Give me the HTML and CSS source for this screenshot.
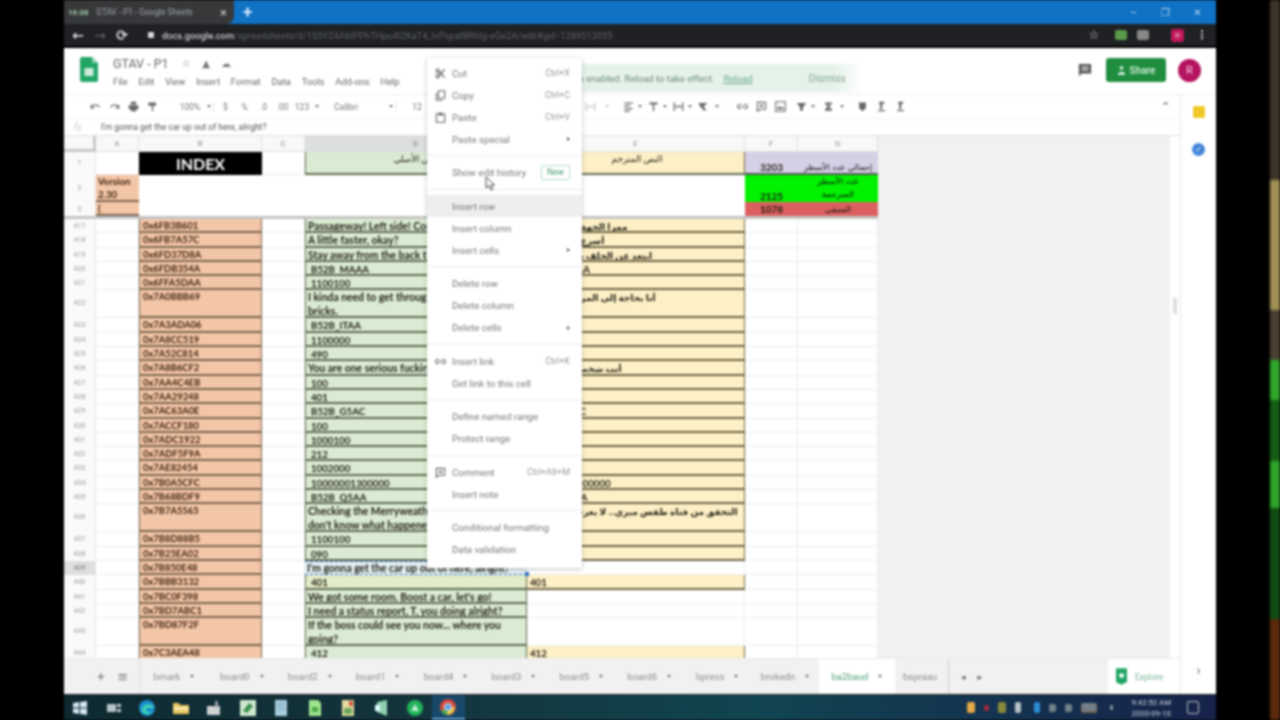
FILE: index.html
```html
<!DOCTYPE html>
<html lang="en">
<head>
<meta charset="utf-8">
<title>GTAV - P1 - Google Sheets</title>
<link rel="stylesheet" href="styles.css">
</head>
<body>
<svg class="defs" aria-hidden="true">
  <symbol id="undo" viewBox="0 0 16 16"><path d="M2 9c2-4 8-5 12 0" fill="none" stroke="currentColor" stroke-width="2"/><path d="M1 5v6h6z" fill="currentColor"/></symbol>
  <symbol id="redo" viewBox="0 0 16 16"><path d="M14 9c-2-4-8-5-12 0" fill="none" stroke="currentColor" stroke-width="2"/><path d="M15 5v6H9z" fill="currentColor"/></symbol>
  <symbol id="print" viewBox="0 0 16 16"><path d="M4 1h8v4H4zM1 6h14v6h-3v3H4v-3H1z" fill="currentColor"/></symbol>
  <symbol id="paint" viewBox="0 0 16 16"><path d="M2 2h11v5H2zM7 7h2v8H7z" fill="currentColor"/></symbol>
  <symbol id="al" viewBox="0 0 16 16"><path d="M2 2h12v2H2zM2 6h8v2H2zM2 10h12v2H2zM2 14h8v2H2z" fill="currentColor"/></symbol>
  <symbol id="va" viewBox="0 0 16 16"><path d="M2 2h12v3H2zM7 5h2v10H7z" fill="currentColor"/></symbol>
  <symbol id="wrap" viewBox="0 0 16 16"><path d="M1 2h2v12H1zM13 2h2v12h-2zM4 7h8v2H4z" fill="currentColor"/></symbol>
  <symbol id="rot" viewBox="0 0 16 16"><path d="M1 3h13L8 8l4 5-3 1-6-6z" fill="currentColor"/></symbol>
  <symbol id="link" viewBox="0 0 16 16"><path d="M6 5H4a3 3 0 0 0 0 6h2M10 5h2a3 3 0 0 1 0 6h-2M5 8h6" fill="none" stroke="currentColor" stroke-width="1.6"/></symbol>
  <symbol id="cmt" viewBox="0 0 16 16"><path d="M2 2h12v10H6l-4 3z" fill="none" stroke="currentColor" stroke-width="1.6"/><path d="M7 5h2v4H7zM5 6h6v2H5z" fill="currentColor"/></symbol>
  <symbol id="chart" viewBox="0 0 16 16"><path d="M1 1h14v14H1z" fill="none" stroke="currentColor" stroke-width="1.6"/><path d="M3 12l3-5 3 3 2-2 2 4z" fill="currentColor"/></symbol>
  <symbol id="flt" viewBox="0 0 16 16"><path d="M1 3h14l-5 6v5H6V9z" fill="currentColor"/></symbol>
  <symbol id="sum" viewBox="0 0 16 16"><path d="M3 2h10v3H8l3 3-3 3h5v3H3v-2l4-4-4-4z" fill="currentColor"/></symbol>
  <symbol id="pin" viewBox="0 0 16 16"><path d="M3 2h10v8l-5 5-5-5z" fill="currentColor"/></symbol>
  <symbol id="in" viewBox="0 0 16 16"><path d="M5 1h7v3h-3v8H6V4H4zM3 13h10v2H3z" fill="currentColor"/></symbol>
  <symbol id="scis" viewBox="0 0 16 16"><circle cx="4" cy="4" r="2.4" fill="none" stroke="currentColor" stroke-width="1.6"/><circle cx="4" cy="12" r="2.4" fill="none" stroke="currentColor" stroke-width="1.6"/><path d="M6 5l8 9M6 11l8-9" stroke="currentColor" stroke-width="2"/></symbol>
  <symbol id="copy" viewBox="0 0 16 16"><path d="M5 1h9v11H5z" fill="none" stroke="currentColor" stroke-width="1.6"/><path d="M2 4v11h9" fill="none" stroke="currentColor" stroke-width="1.6"/></symbol>
  <symbol id="paste" viewBox="0 0 16 16"><path d="M2 3h12v12H2z" fill="none" stroke="currentColor" stroke-width="1.6"/><path d="M5 1h6v4H5z" fill="currentColor"/></symbol>
</svg>
<div class="page">
  <div class="edge-left"></div>
  <div class="window">
    <div class="tabstrip">
      <div class="tab">
        <span class="fav">16:08</span>
        <span class="tab-title">GTAV - P1 - Google Sheets</span>
        <span class="tab-x">×</span>
      </div>
      <span class="newtab">+</span>
      <div class="winctl"><span>–</span><span>❐</span><span>✕</span></div>
    </div>
    <div class="addr">
      <span class="nav">←</span><span class="nav dim">→</span><span class="nav">⟳</span>
      <span class="lock"></span>
      <span class="url"><b>docs.google.com</b>/spreadsheets/d/1S5YZ4A6tPPhTHpu4I2KaT4_IvPspaf8Rfdg-eGe2A/edit#gid=1289512055</span>
      <span class="nav star">☆</span>
      <span class="ext green"></span><span class="ext grey"></span>
      <span class="prof">R</span>
      <span class="dots">⋮</span>
    </div>
    <div class="dochead">
      <svg class="logo" viewBox="0 0 18 25"><path d="M2 0h10l6 6v17a2 2 0 0 1-2 2H2a2 2 0 0 1-2-2V2a2 2 0 0 1 2-2z" fill="#23a566"/><path d="M12 0l6 6h-6z" fill="#8ed1b1"/><path d="M4.500 11h9v8h-9z" fill="#cdeadb"/></svg>
      <div class="docinfo">
        <div class="titleline">
          <span class="doctitle">GTAV - P1</span>
          <span class="ti">☆</span><span class="ti drv">▲</span><span class="ti">☁</span>
        </div>
        <div class="menubar">
          <span>File</span><span>Edit</span><span>View</span><span>Insert</span><span>Format</span><span>Data</span><span>Tools</span><span>Add-ons</span><span>Help</span>
        </div>
      </div>
      <svg class="cmtbtn" viewBox="0 0 16 16"><path d="M1 1h14v11H4l-3 3z" fill="#555"/><path d="M4 4h8v1.500H4zM4 7h8v1.500H4z" fill="#fff"/></svg>
      <div class="share"><svg viewBox="0 0 12 14" class="sh-i"><circle cx="6" cy="3.500" r="2.500" fill="#cdeadb"/><path d="M1 13c0-6 10-6 10 0z" fill="#cdeadb"/></svg>Share</div>
      <div class="avatar">R</div>
    </div>
    <div class="work">
      <div class="left">
        <div class="toolbar">
          <svg class="ic"><use href="#undo"/></svg><svg class="ic"><use href="#redo"/></svg><svg class="ic"><use href="#print"/></svg><svg class="ic"><use href="#paint"/></svg>
          <span class="tt t100">100%</span><i class="caret"></i><span class="vs"></span>
          <span class="tt w19">$</span><span class="tt w19">%</span><span class="tt w19">.0</span><span class="tt w19">.00</span><span class="tt w20">123</span><i class="caret"></i>
          <span class="tt tfont">Calibri</span><i class="caret"></i><span class="vs"></span>
          <span class="tt tsize">12</span>
          <span class="tgroup">
            <svg class="ic"><use href="#wrap"/></svg><i class="caret c2"></i>
            <svg class="ic"><use href="#al"/></svg><i class="caret"></i>
            <svg class="ic"><use href="#va"/></svg><i class="caret"></i>
            <svg class="ic"><use href="#wrap"/></svg><i class="caret"></i>
            <svg class="ic"><use href="#rot"/></svg><i class="caret c4"></i>
            <svg class="ic"><use href="#link"/></svg><svg class="ic"><use href="#cmt"/></svg><svg class="ic"><use href="#chart"/></svg>
            <svg class="ic push"><use href="#flt"/></svg><i class="caret"></i>
            <svg class="ic push"><use href="#sum"/></svg><i class="caret c3"></i>
            <svg class="ic"><use href="#pin"/></svg><svg class="ic"><use href="#in"/></svg><svg class="ic"><use href="#in"/></svg>
          </span>
          <span class="chev">⌃</span>
        </div>
        <div class="formula"><span class="fx">fx</span><span class="ftext">I'm gonna get the car up out of here, alright?</span></div>
        <div class="main">
          <div class="sheet">
            <div class="row head"><span class="corner"></span><span class="ch">A</span><span class="ch">B</span><span class="ch">C</span><span class="ch sel">D</span><span class="ch">E</span><span class="ch">F</span><span class="ch">G</span></div>
            <div class="row r1"><span class="rh">1</span><span class="w"></span><span class="idx">INDEX</span><span class="w"></span><span class="d ttl" dir="rtl">النص الأصلي</span><span class="e ttl" dir="rtl">النص المترجم</span><span class="pur num">3203</span><span class="pur ar" dir="rtl">إجمالي عدد الأسطر</span></div>
            <div class="row r2"><span class="rh">2</span><span class="k ver">Version 2.30</span><span class="b"></span><span class="b"></span><span class="b"></span><span class="b"></span><span class="grn num end">2125</span><span class="grn ar two" dir="rtl">عدد الأسطر<br>المترجمة</span></div>
            <div class="row r3"><span class="rh">3</span><span class="k ver">(</span><span class="b"></span><span class="b"></span><span class="b"></span><span class="b"></span><span class="red num">1078</span><span class="red ar" dir="rtl">المتبقي</span></div>
            <div class="frozen"></div>
            <div class="row"><span class="rh">417</span><span class="w"></span><span class="k">0x6FB3B601</span><span class="w"></span><span class="d">Passageway! Left side! Coming up on the left</span><span class="e"><span dir="rtl">ممرا الجهة اليسرى هنا</span></span><span class="w"></span><span class="w"></span></div>
            <div class="row"><span class="rh">418</span><span class="w"></span><span class="k">0x6FB7A57C</span><span class="w"></span><span class="d">A little faster, okay?</span><span class="e"><span dir="rtl">أسرع قليلا، حسنا</span></span><span class="w"></span><span class="w"></span></div>
            <div class="row"><span class="rh">419</span><span class="w"></span><span class="k">0x6FD37D8A</span><span class="w"></span><span class="d">Stay away from the back there, all right?</span><span class="e"><span dir="rtl">ابتعد عن الخلف هناك، اتفقنا</span></span><span class="w"></span><span class="w"></span></div>
            <div class="row"><span class="rh">420</span><span class="w"></span><span class="k">0x6FDB354A</span><span class="w"></span><span class="d in">B52B_MAAA</span><span class="e in">B52B_MAAA</span><span class="w"></span><span class="w"></span></div>
            <div class="row"><span class="rh">421</span><span class="w"></span><span class="k">0x6FFA5DAA</span><span class="w"></span><span class="d in">1100100</span><span class="e in">1100100</span><span class="w"></span><span class="w"></span></div>
            <div class="row tall"><span class="rh">422</span><span class="w"></span><span class="k">0x7A0BBB69</span><span class="w"></span><span class="d wrapc">I kinda need to get through this wall of<br>bricks.</span><span class="e"><span dir="rtl">أنا بحاجة إلى المرور من هناك</span></span><span class="w"></span><span class="w"></span></div>
            <div class="row"><span class="rh">423</span><span class="w"></span><span class="k">0x7A3ADA06</span><span class="w"></span><span class="d in">B52B_ITAA</span><span class="e in">B52B_ITAA</span><span class="w"></span><span class="w"></span></div>
            <div class="row"><span class="rh">424</span><span class="w"></span><span class="k">0x7A8CC519</span><span class="w"></span><span class="d in">1100000</span><span class="e in">1100000</span><span class="w"></span><span class="w"></span></div>
            <div class="row"><span class="rh">425</span><span class="w"></span><span class="k">0x7A52C814</span><span class="w"></span><span class="d in">490</span><span class="e in">490</span><span class="w"></span><span class="w"></span></div>
            <div class="row"><span class="rh">426</span><span class="w"></span><span class="k">0x7A8B6CF2</span><span class="w"></span><span class="d">You are one serious fucking guy, man</span><span class="e"><span dir="rtl">أنت شخص جاد للغاية!</span></span><span class="w"></span><span class="w"></span></div>
            <div class="row"><span class="rh">427</span><span class="w"></span><span class="k">0x7AA4C4EB</span><span class="w"></span><span class="d in">100</span><span class="e in">100</span><span class="w"></span><span class="w"></span></div>
            <div class="row"><span class="rh">428</span><span class="w"></span><span class="k">0x7AA29248</span><span class="w"></span><span class="d in">401</span><span class="e in">401</span><span class="w"></span><span class="w"></span></div>
            <div class="row"><span class="rh">429</span><span class="w"></span><span class="k">0x7AC63A0E</span><span class="w"></span><span class="d in">B52B_G5AC</span><span class="e in">B52B_G5AC</span><span class="w"></span><span class="w"></span></div>
            <div class="row"><span class="rh">430</span><span class="w"></span><span class="k">0x7ACCF180</span><span class="w"></span><span class="d in">100</span><span class="e in">100</span><span class="w"></span><span class="w"></span></div>
            <div class="row"><span class="rh">431</span><span class="w"></span><span class="k">0x7ADC1922</span><span class="w"></span><span class="d in">1000100</span><span class="e in">1000100</span><span class="w"></span><span class="w"></span></div>
            <div class="row"><span class="rh">432</span><span class="w"></span><span class="k">0x7ADF5F9A</span><span class="w"></span><span class="d in">212</span><span class="e in">212</span><span class="w"></span><span class="w"></span></div>
            <div class="row"><span class="rh">433</span><span class="w"></span><span class="k">0x7AE82454</span><span class="w"></span><span class="d in">1002000</span><span class="e in">1002000</span><span class="w"></span><span class="w"></span></div>
            <div class="row"><span class="rh">434</span><span class="w"></span><span class="k">0x7B0A5CFC</span><span class="w"></span><span class="d in">10000001300000</span><span class="e in">10000001300000</span><span class="w"></span><span class="w"></span></div>
            <div class="row"><span class="rh">435</span><span class="w"></span><span class="k">0x7B68BDF9</span><span class="w"></span><span class="d in">B52B_Q5AA</span><span class="e in">B52B_Q5AA</span><span class="w"></span><span class="w"></span></div>
            <div class="row tall"><span class="rh">436</span><span class="w"></span><span class="k">0x7B7A5565</span><span class="w"></span><span class="d wrapc">Checking the Merryweather channel... they<br>don't know what happened.</span><span class="e"><span dir="rtl">التحقق من قناة طقس ميري... لا يعرفون ما حدث جيد جدا</span></span><span class="w"></span><span class="w"></span></div>
            <div class="row"><span class="rh">437</span><span class="w"></span><span class="k">0x7B8D88B5</span><span class="w"></span><span class="d in">1100100</span><span class="e in">1100100</span><span class="w"></span><span class="w"></span></div>
            <div class="row"><span class="rh">438</span><span class="w"></span><span class="k">0x7B25EA02</span><span class="w"></span><span class="d in">090</span><span class="e in">090</span><span class="w"></span><span class="w"></span></div>
            <div class="row"><span class="rh hot">439</span><span class="w"></span><span class="k">0x7B850E48</span><span class="w"></span><span class="d active">I'm gonna get the car up out of here, alright?</span><span class="w"></span><span class="w"></span><span class="w"></span></div>
            <div class="row"><span class="rh">440</span><span class="w"></span><span class="k">0x7BBB3132</span><span class="w"></span><span class="d in tint">401</span><span class="e">401</span><span class="w"></span><span class="w"></span></div>
            <div class="row"><span class="rh">441</span><span class="w"></span><span class="k">0x7BC0F398</span><span class="w"></span><span class="d">We got some room. Boost a car, let's go!</span><span class="w"></span><span class="w"></span><span class="w"></span></div>
            <div class="row"><span class="rh">442</span><span class="w"></span><span class="k">0x7BD7ABC1</span><span class="w"></span><span class="d">I need a status report, T, you doing alright?</span><span class="w"></span><span class="w"></span><span class="w"></span></div>
            <div class="row tall"><span class="rh">443</span><span class="w"></span><span class="k">0x7BD87F2F</span><span class="w"></span><span class="d wrapc">If the boss could see you now... where you<br>going?</span><span class="w"></span><span class="w"></span><span class="w"></span></div>
            <div class="row"><span class="rh">444</span><span class="w"></span><span class="k">0x7C3AEA48</span><span class="w"></span><span class="d in">412</span><span class="e">412</span><span class="w"></span><span class="w"></span></div>
          </div>
          <div class="rest"></div>
          <div class="vbar"><span class="thumb"></span></div>
        </div>
        <div class="sheettabs">
          <span class="sbtn plus">+</span><span class="sbtn">≡</span>
          <div class="tabs">
            <span class="st">bmark<i class="caret"></i></span><span class="st">board0<i class="caret"></i></span><span class="st">board2<i class="caret"></i></span><span class="st">board1<i class="caret"></i></span><span class="st">board4<i class="caret"></i></span><span class="st">board3<i class="caret"></i></span><span class="st">board5<i class="caret"></i></span><span class="st">board6<i class="caret"></i></span><span class="st">bpress<i class="caret"></i></span><span class="st">brokedn<i class="caret"></i></span>
            <span class="st on">ba2baud<i class="caret"></i></span><span class="st cut">bspraau</span>
          </div>
          <span class="arrows"><i>◂</i><i>▸</i></span>
          <div class="explore"><svg viewBox="0 0 12 18" class="ex-i"><path d="M1 0h10a1 1 0 0 1 1 1v14l-6 3-6-3V1a1 1 0 0 1 1-1z" fill="#1fa463"/><circle cx="6" cy="8" r="2.600" fill="#fff"/></svg><span>Explore</span></div>
        </div>
      </div>
      <div class="side">
        <span class="keep"></span>
        <span class="tasks">✓</span>
        <span class="sidearrow">›</span>
      </div>
    </div>
    <div class="taskbar">
      <svg class="tb" viewBox="0 0 16 16"><path d="M1 3l6-1v5.500H1zM8 2l7-1v6.500H8zM1 8.500h6V14l-6-1zM8 8.500h7V15l-7-1z" fill="#d8e6f2"/></svg>
      <svg class="tb" viewBox="0 0 16 16"><path d="M1 4h9v8H1zM11 4h4v3h-4zM11 9h4v3h-4z" fill="#b8c6cc"/></svg>
      <svg class="tb" viewBox="0 0 16 16"><circle cx="8" cy="8" r="8" fill="#1b8ecf"/><path d="M3 10c0-6 10-8 12-2H7c-1 3 2 5 6 4-4 4-10 2-10-2z" fill="#3fd4b0"/></svg>
      <svg class="tb" viewBox="0 0 16 16"><path d="M0 3h6l1 2h9v9H0z" fill="#e8c860"/><path d="M1 7h14v3H1z" fill="#f5e9b0"/></svg>
      <svg class="tb" viewBox="0 0 16 16"><path d="M1 6h13v9H1z" fill="#cfd3d4"/><path d="M9 1h3v6H9z" fill="#99a"/></svg>
      <svg class="tb" viewBox="0 0 16 16"><path d="M0 0h16v16H0z" fill="#cfe8cf"/><path d="M3 11l6-8 4 3-6 7z" fill="#3a8f4e"/></svg>
      <svg class="tb" viewBox="0 0 16 16"><path d="M2 0h12v16H2z" fill="#a9cde0"/><path d="M4 3h8v1H4zM4 6h8v1H4zM4 9h8v1H4z" fill="#7aa2b8"/></svg>
      <svg class="tb" viewBox="0 0 16 16"><path d="M2 0h9l3 3v13H2z" fill="#9fe58e"/><path d="M5 7h6v5H5z" fill="#4fa84a"/></svg>
      <svg class="tb" viewBox="0 0 16 16"><path d="M2 0h12v16H2z" fill="#e4dca0"/><path d="M4 8h8v6H4z" fill="#6ea860"/><path d="M9 1h4v5H9z" fill="#d05a4a"/></svg>
      <svg class="tb" viewBox="0 0 16 16"><path d="M3 2l10-2v16L3 12z" fill="#8fcfb0"/><path d="M1 5h5v6H1z" fill="#dff"/></svg>
      <svg class="tb" viewBox="0 0 16 16"><circle cx="8" cy="8" r="8" fill="#22b35a"/><path d="M8 4l4 7H4z" fill="#bff0cf"/></svg>
      <div class="tb-active"><svg class="tb" viewBox="0 0 16 16"><circle cx="8" cy="8" r="8" fill="#d8493e"/><path d="M8 8L1 12a8 8 0 0 0 7 4z" fill="#4aa853"/><path d="M8 8l-1 8a8 8 0 0 0 8-8z" fill="#e6c84a"/><circle cx="8" cy="8" r="3.500" fill="#5a9be8" stroke="#eee"/></svg></div>
      <div class="tray">
        <span class="ty o"></span><span class="ty r"></span><span class="ty y"></span><span class="ty g"></span><span class="ty b"></span><span class="ty g2"></span><span class="ty g2"></span><span class="ty k"></span><span class="ty f"></span>
        <span class="clock">9:42:52 AM<br>2020-09-10</span>
        <span class="notif"></span>
      </div>
    </div>
    <div class="banner"><span class="btext">Add-on enabled. Reload to take effect.</span><span class="blink">Reload</span><span class="bdis">Dismiss</span></div>
    <div class="ctx">
      <div class="mi"><svg class="mic"><use href="#scis"/></svg>Cut<em>Ctrl+X</em></div>
      <div class="mi"><svg class="mic"><use href="#copy"/></svg>Copy<em>Ctrl+C</em></div>
      <div class="mi"><svg class="mic"><use href="#paste"/></svg>Paste<em>Ctrl+V</em></div>
      <div class="mi">Paste special<i class="arr"></i></div>
      <div class="ms"></div>
      <div class="mi">Show edit history<span class="newb">New</span></div>
      <div class="ms"></div>
      <div class="mi hl">Insert row</div>
      <div class="mi">Insert column</div>
      <div class="mi">Insert cells<i class="arr"></i></div>
      <div class="ms"></div>
      <div class="mi">Delete row</div>
      <div class="mi">Delete column</div>
      <div class="mi">Delete cells<i class="arr"></i></div>
      <div class="ms"></div>
      <div class="mi"><svg class="mic"><use href="#link"/></svg>Insert link<em>Ctrl+K</em></div>
      <div class="mi">Get link to this cell</div>
      <div class="ms"></div>
      <div class="mi">Define named range</div>
      <div class="mi">Protect range</div>
      <div class="ms"></div>
      <div class="mi"><svg class="mic"><use href="#cmt"/></svg>Comment<em>Ctrl+Alt+M</em></div>
      <div class="mi">Insert note</div>
      <div class="ms"></div>
      <div class="mi">Conditional formatting</div>
      <div class="mi">Data validation</div>
    </div>
    <svg class="cursor" viewBox="0 0 10 15"><path d="M1 1v11l3-2.500 2 4.500 2-1-2-4h3.500z" fill="#fff" stroke="#333" stroke-width=".9"/></svg>
  </div>
  <div class="edge-right"></div>
  <div class="strip"></div>
</div>
</body>
</html>
```
FILE: styles.css
```css
* { box-sizing: border-box; }
html, body { margin: 0; height: 100%; background: #000; }
body { font-family: Roboto, "DejaVu Sans", sans-serif; overflow: hidden; }
.defs { display: none; }
.page { display: flex; width: 1280px; height: 720px; background: #000; }
.edge-left { width: 64px; }
.edge-right { width: 54px; }
.strip { width: 10px; filter: blur(1.5px); background: linear-gradient(#3d3428 0 25%, #a28f55 25% 43%, #4a4030 43% 50%, #2fa62a 50% 55.5%, #155c14 55.5% 64%, #2da32a 64% 70.5%, #0f4d12 70.5% 86%, #5c2a0c 86%); }
.window { position: relative; width: 1152px; height: 720px; display: flex; flex-direction: column; background: #fff; filter: blur(.85px); overflow: hidden; }

.tabstrip { height: 24px; flex: none; display: flex; align-items: center; background: #0f72c4; color: #fff; }
.tab { width: 170px; height: 24px; display: flex; align-items: center; background: #37383a; border-radius: 0 0 8px 0; padding: 0 6px 0 4px; }
.fav { font-size: 8px; width: 28px; color: #9fc7a8; font-weight: 700; }
.tab-title { flex: 1; font-size: 8.300px; color: #a2a6aa; white-space: nowrap; }
.tab-x { font-size: 13px; color: #ccc; margin-right: 1px; }
.newtab { margin-left: 9px; font-size: 17px; font-weight: 700; color: #cfe6fa; }
.winctl { margin-left: auto; display: flex; gap: 17px; padding-right: 11px; font-size: 10px; color: #bcd9f2; }
.winctl span { width: 15px; text-align: center; }

.addr { height: 24px; flex: none; display: flex; align-items: center; background: #202124; border-bottom: 2px solid #000; color: #ddd; }
.nav { width: 22px; text-align: center; font-size: 14px; font-weight: 700; color: #dcdcdc; }
.nav:first-child { margin-left: 3px; }
.nav.dim { color: #55575a; }
.lock { width: 6px; height: 6px; margin-left: 15px; margin-right: 8px; background: #d8d8d8; border-radius: 1px; }
.url { font-size: 9.300px; color: #5e6266; width: 927px; white-space: nowrap; overflow: hidden; }
.url b { font-weight: 500; color: #c8cacc; font-size: 9.300px; }
.star { margin-left: -2px; font-size: 12px; width: 14px; }
.ext { width: 12px; height: 10px; border-radius: 2px; }
.ext.green { margin-left: 14px; background: #5a9a4a; }
.ext.grey { margin-left: 10px; background: #888; }
.prof { margin-left: 22px; width: 13px; height: 13px; border-radius: 3px; background: #c2185b; font-size: 8px; line-height: 13px; text-align: center; color: #f4bcd4; }
.dots { margin-left: 12px; color: #bbb; font-size: 12px; font-weight: 700; }

.dochead { height: 47px; flex: none; display: flex; align-items: center; padding: 0 15px 0 16px; background: #fff; border-bottom: 1px solid #eee; }
.logo { width: 18px; height: 25px; margin-top: -3px; }
.docinfo { margin-left: 15px; flex: 1; align-self: flex-start; padding-top: 7px; }
.titleline { display: flex; align-items: center; height: 16px; }
.doctitle { font-size: 12.500px; color: #666; width: 63px; }
.ti { width: 20px; font-size: 10px; color: #777; text-align: center; }
.menubar { display: flex; gap: 10.9px; margin-top: 5px; margin-left: 0; font-size: 9.3px; color: #666; }
.cmtbtn { width: 14px; height: 14px; margin-right: 14px; margin-bottom: 2px; }
.share { width: 60px; height: 24px; margin-bottom: 2px; display: flex; align-items: center; justify-content: center; gap: 4px; background: #1e8e3e; border-radius: 3px; color: #d8efe0; font-size: 10px; font-weight: 500; }
.sh-i { width: 9px; height: 11px; }
.avatar { margin-left: 12px; margin-bottom: 2px; width: 23px; height: 23px; border-radius: 50%; background: #b5135f; color: #f8cfe2; font-size: 11px; line-height: 23px; text-align: center; }

.work { height: 599px; flex: none; display: flex; }
.left { width: 1116px; display: flex; flex-direction: column; }
.toolbar { height: 23px; flex: none; display: flex; align-items: center; padding-left: 22px; color: #666; position: relative; }
.ic { width: 11px; height: 11px; margin: 0 4px; flex: none; color: #666; }
.ic.push { margin-left: 6px; }
.tt { font-size: 8.5px; color: #777; text-align: center; flex: none; }
.t100 { width: 28px; margin-left: 14px; }
.w19 { width: 19px; }
.w20 { width: 20px; }
.tfont { width: 32px; margin: 0 24px 0 11px; }
.tsize { width: 14px; margin-left: 12px; }
.vs { width: 1px; height: 12px; background: #e6e6e6; margin: 0 2px; }
.caret { display: inline-block; flex: none; width: 0; height: 0; border: 2.5px solid transparent; border-top: 3px solid #777; border-bottom: 0; margin-left: 4px; }
.toolbar > .caret { margin-left: 3px; }
.tgroup { position: absolute; left: 517px; top: 6px; display: flex; align-items: center; }
.tgroup .caret { margin: 0 2px 0 0; }
.tgroup .c2 { margin: 0 10px 0 5px; border-top-color: #ccc; }
.tgroup .c3 { margin: 0 9px 0 2px; }
.tgroup .c4 { margin: 0 14px 0 2px; }
.tgroup > svg:first-child { color: #ccc; }
.chev { position: absolute; left: 1097px; top: 5px; font-size: 11px; font-weight: 700; color: #666; }
.formula { height: 18px; flex: none; display: flex; align-items: center; border-top: 1px solid #f2f2f2; border-bottom: 1px solid #e0e0e0; }
.fx { width: 37px; padding-left: 10px; font-size: 10px; font-style: italic; color: #d0d0d0; }
.ftext { font-size: 8.5px; color: #555; }

.main { height: 522px; flex: none; display: flex; }
.sheet { width: 814px; overflow: hidden; flex: none; font-family: Lato, "DejaVu Sans", sans-serif; background: #fff; }
.rest { flex: 1; background: #f1f1f1; }
.vbar { width: 10px; background: #fff; position: relative; }
.thumb { position: absolute; left: 3px; top: 162px; width: 4px; height: 16px; background: #ddd; }

.row { display: grid; grid-template-columns: 32px 43px 123px 43px 222px 218px 53px 80px; height: 14.3px; font-size: 9.7px; font-weight: 700; line-height: 14px; color: #1f1d12; }
.row > span { overflow: hidden; white-space: nowrap; display: block; }
.tall { height: 28px; }
.head { height: 16px; font-weight: 400; }
.r1 { height: 23px; }
.r2 { height: 27px; }
.r3 { height: 14px; }
.corner { background: #f8f8f8; border-right: 3px solid #c8c8c8; border-bottom: 3px solid #c8c8c8; }
.ch { background: #f8f8f8; border-right: 1px solid #e4e4e4; border-bottom: 1px solid #ddd; font-size: 7.500px; font-weight: 400; line-height: 15px; text-align: center; color: #888; font-family: Roboto, sans-serif; }
.ch.sel { background: #dcdee0; color: #777; }
.rh { background: #fafafa; border-right: 1px solid #e4e4e4; font-size: 7px; font-weight: 400; line-height: 14px; text-align: center; color: #999; font-family: Roboto, sans-serif; }
.rh.hot { background: #dcdee0; color: #777; }
.tall .rh { line-height: 27px; }
.r1 .rh { line-height: 23px; }
.r2 .rh { line-height: 26px; }
.w { background: #fff; border-right: 1px solid #ececec; border-bottom: 1px solid #ececec; }
.b { background: #fff; }
.k { background: #f4c6a8; border: 1px solid #7a6650; border-width: 0 1px 2px; padding-left: 3px; color: #3f2410; font-size: 9.4px; }
.d { background: #dbebd3; border: 1px solid #5f6b50; border-width: 0 1px 2px; padding-left: 2px; font-size: 10.35px; }
.e { background: #fdf0c6; border: 1px solid #6c6444; border-width: 0 1px 2px 0; padding-left: 3px; font-size: 9.7px; }
.e [dir] { font-size: 9px; }
.in { padding-left: 5px; font-size: 9.7px; }
.d.wrapc, .tall .e { white-space: normal; line-height: 13.500px; padding-top: 1px; }
.tint { background: #e3ecc9; }
.row > .active { position: relative; overflow: visible; background: #e4eff2; border: 1px dashed #2f72c8; border-width: 1px 0; padding-left: 2px; line-height: 12.500px; }
.active::after { content: ""; position: absolute; right: -2px; bottom: -2px; width: 4px; height: 4px; background: #2f72c8; }
.idx { background: #000; color: #fff; font-size: 16px; line-height: 23px; text-align: center; }
.ttl { text-align: center; font-weight: 400; font-size: 9px; line-height: 14px; }
.r1 .d, .r1 .e { border-bottom: 2px solid #5f6b50; }
.ver { border-width: 0 0 2px; line-height: 13px; white-space: normal !important; padding-right: 6px; padding-left: 2px; font-size: 9.700px; }
.pur { background: #d6d0e6; padding-top: 9px; line-height: 12px; border-bottom: 2px solid #555; }
.grn { background: #00f200; }
.red { background: #dc6060; line-height: 14px; }
.num { text-align: center; font-size: 10px; }
.ar { text-align: center; font-size: 8.500px; font-weight: 400; color: #111; }
.end { padding-top: 14px; }
.two { line-height: 13px; }
.frozen { height: 3px; background: #c4c4c4; }

.sheettabs { height: 36px; flex: none; display: flex; align-items: center; background: #f1f1f1; border-top: 1px solid #eaeaea; color: #888; font-size: 9.5px; }
.sbtn { width: 22px; text-align: center; font-size: 13px; color: #777; }
.plus { margin-left: 26px; }
.tabs { display: flex; height: 100%; margin-left: 5px; border-left: 1px solid #ddd; }
.st { width: 67.9px; height: 100%; display: flex; align-items: center; justify-content: center; color: #8c8c8c; }
.st .caret { margin-left: 10px; }
.on { width: 76px; background: #fff; color: #4f9e78; }
.cut { width: 54px; border-right: 1px solid #ccc; overflow: hidden; justify-content: flex-start; padding-left: 8px; }
.arrows { display: flex; gap: 12px; margin-left: 12px; font-style: normal; color: #666; font-size: 9px; }
.arrows i { font-style: normal; }
.explore { margin-left: auto; width: 72px; height: 100%; display: flex; align-items: center; gap: 8px; padding-left: 8px; background: #fff; color: #7bb79a; font-size: 8.500px; }
.ex-i { width: 11px; height: 17px; }

.side { width: 36px; flex: none; display: flex; flex-direction: column; align-items: center; background: #fff; border-left: 1px solid #e8e8e8; position: relative; }
.keep { width: 12px; height: 12px; margin-top: 11px; background: #f0c828; border-radius: 2px; }
.tasks { width: 13px; height: 13px; margin-top: 25px; background: #4285d8; border-radius: 50%; color: #fff; font-size: 8px; line-height: 13px; text-align: center; }
.sidearrow { margin-top: auto; margin-bottom: 16px; color: #777; font-size: 14px; }

.taskbar { height: 26px; flex: none; display: flex; align-items: center; padding-left: 8px; gap: 17.5px; background: linear-gradient(90deg, #0e2a30, #14343c 30%, #114550 60%, #143450 80%, #16224a); border-top: 1px solid #222; }
.tb { width: 16px; height: 16px; flex: none; }
.tb-active { width: 33px; height: 25px; margin-left: -9px; display: flex; align-items: center; justify-content: center; background: #18496a; border-bottom: 2px solid #6aa8d8; }
.tray { margin-left: auto; display: flex; align-items: center; gap: 9px; padding-right: 17px; }
.ty { width: 8px; height: 11px; border-radius: 2px; background: #aaa; flex: none; }
.ty.o { background: #e2a84a; }
.ty.r { background: #a02a40; width: 5px; height: 6px; }
.ty.y { background: #8a8a3a; }
.ty.g { background: #b8c0c8; width: 6px; }
.ty.b { background: #2d8cd8; width: 6px; margin-left: 4px; }
.ty.g2 { background: #71808a; width: 7px; height: 8px; }
.ty.k { background: #71808a; width: 16px; height: 10px; }
.ty.f { background: #8a98a2; width: 3px; height: 5px; margin-left: 4px; }
.clock { margin-left: 9px; font-size: 7.800px; line-height: 11px; color: #cfd6dc; text-align: center; }
.notif { margin-left: 7px; width: 12px; height: 13px; border: 1.500px solid #bcc4ca; border-radius: 2px; }

.banner { position: absolute; left: 456px; top: 64px; width: 342px; height: 28px; display: flex; align-items: center; justify-content: flex-end; background: linear-gradient(90deg, #e5f2ea 92%, #fff); font-size: 9.5px; color: #6b8a76; white-space: nowrap; }
.btext { flex: none; }
.blink { margin: 0 56px 0 9px; color: #6aa88a; text-decoration: underline; }
.bdis { margin-right: 16px; color: #8aa898; font-size: 10.500px; }

.ctx { position: absolute; left: 363px; top: 58px; width: 155px; height: 510px; padding-top: 4px; background: #fff; box-shadow: 0 1px 4px rgba(0,0,0,.25); font-size: 9.7px; color: #777; }
.mi { height: 22px; display: flex; align-items: center; padding: 0 12px 0 25px; position: relative; white-space: nowrap; }
.mi em { margin-left: auto; font-style: normal; font-size: 9px; color: #999; }
.mi.hl { background: #eeeeee; }
.ms { height: 11.500px; position: relative; }
.ms::after { content: ""; position: absolute; left: 0; right: 0; top: 5px; height: 1px; background: #ececec; }
.mic { position: absolute; left: 8px; top: 6px; width: 11px; height: 11px; color: #666; }
.arr { margin-left: auto; width: 0; height: 0; border: 2.5px solid transparent; border-left: 3px solid #555; border-right: 0; }
.newb { margin-left: auto; padding: 0 5px; height: 15px; line-height: 13px; border: 1px solid #b3ddc8; border-radius: 2px; font-size: 8.500px; color: #4b9a74; }
.cursor { position: absolute; left: 421px; top: 176px; width: 10px; height: 15px; }
```
